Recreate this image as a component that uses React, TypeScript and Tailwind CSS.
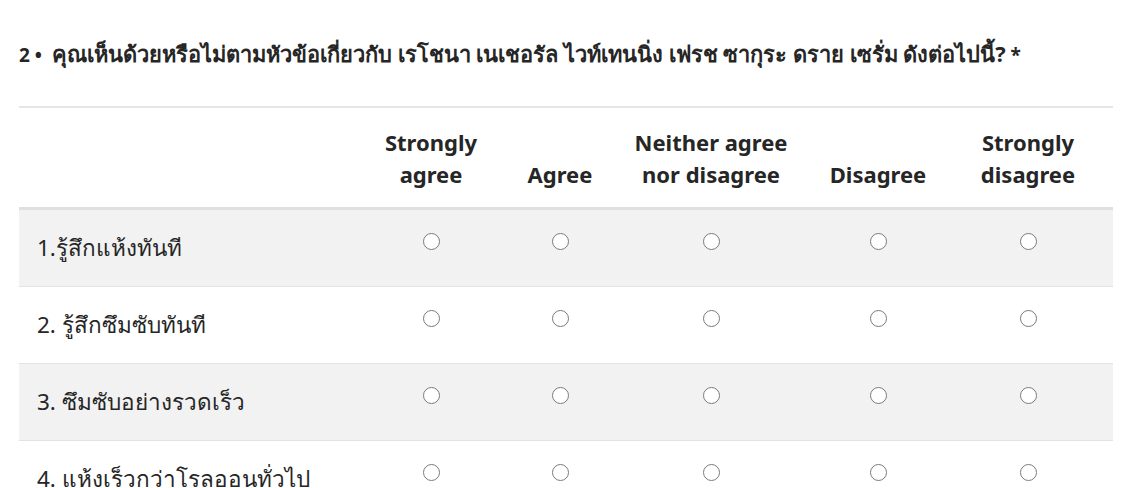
const columns = ['Strongly agree', 'Agree', 'Neither agree nor disagree', 'Disagree', 'Strongly disagree'];
const headers = [
  ['Strongly', 'agree'],
  ['Agree'],
  ['Neither agree', 'nor disagree'],
  ['Disagree'],
  ['Strongly', 'disagree'],
];

const rows = [
  '1.รู้สึกแห้งทันที',
  '2. รู้สึกซึมซับทันที',
  '3. ซึมซับอย่างรวดเร็ว',
  '4. แห้งเร็วกว่าโรลออนทั่วไป',
];

const grid = 'grid grid-cols-[332px_160px_98px_204px_130px_170px]';

function Radio({ label }: { label: string }) {
  return (
    <span
      aria-label={label}
      className="block w-[17px] h-[17px] rounded-full border border-[#7a7a7a] bg-white"
    />
  );
}

export default function App() {
  return (
    <div
      className="min-h-screen bg-white text-[#262626] overflow-hidden"
      style={{ fontFamily: '"Noto Sans", "Open Sans", sans-serif' }}
    >
      <div className="px-[19px] pt-[38px]">
        <h2 className="text-[19px] font-bold leading-[32px] text-[#262626] whitespace-nowrap">
          2 • &nbsp;<span className="text-[21.8px]">คุณเห็นด้วยหรือไม่ตามหัวข้อเกี่ยวกับ เรโชนา เนเชอรัล ไวท์เทนนิ่ง เฟรช ซากุระ ดราย เซรั่ม ดังต่อไปนี้?</span> *
        </h2>

        <div className="mt-[35px] w-[1094px] border-t-2 border-[#e6e6e6]">
          <div className={`${grid} border-b-[3px] border-[#e0e0e0] h-[102px]`}>
            <div />
            {headers.map((h, i) => (
              <div
                key={i}
                className="flex flex-col justify-end items-center pb-[17px] text-[22px] font-bold leading-[32px] text-center"
              >
                {h.map((line) => (
                  <span key={line} className="whitespace-nowrap">{line}</span>
                ))}
              </div>
            ))}
          </div>

          {rows.map((label, r) => (
            <div
              key={label}
              className={`${grid} h-[77px] border-b border-[#e3e3e3] ${r % 2 === 0 ? 'bg-[#f2f2f2]' : 'bg-white'}`}
            >
              <div className="pl-[18px] pt-[22px] text-[22.5px] leading-[32px] text-[#262626] whitespace-nowrap">
                {label}
              </div>
              {columns.map((c) => (
                <div key={c} className="flex justify-center pt-[23px]">
                  <Radio label={c} />
                </div>
              ))}
            </div>
          ))}
        </div>
      </div>
    </div>
  );
}
